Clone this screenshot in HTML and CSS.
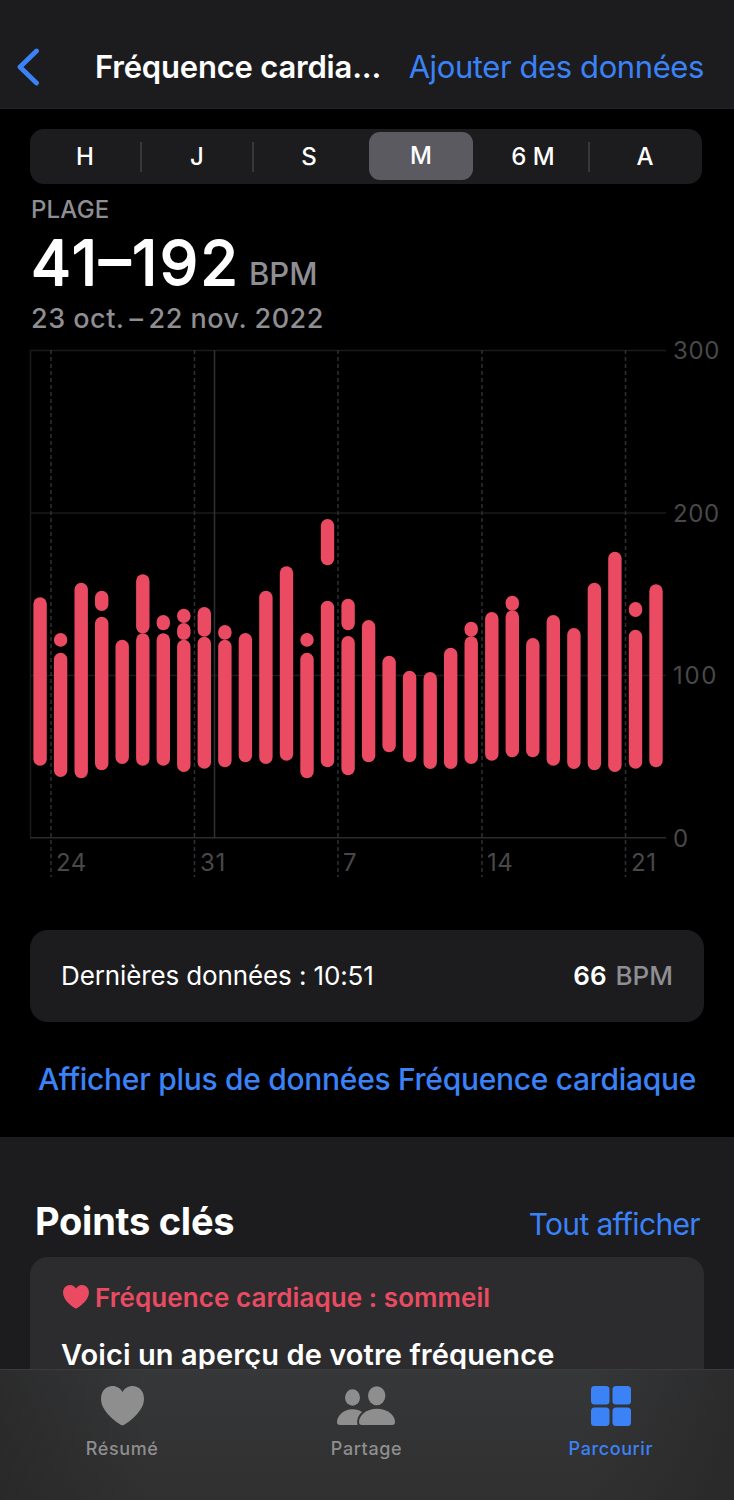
FILE: index.html
```html
<!DOCTYPE html>
<html lang="fr">
<head>
  <meta charset="UTF-8" />
  <title>Fréquence cardiaque</title>
  <link rel="stylesheet" href="styles.css">
</head>
<body>
  <header class="navbar">
    <svg class="back" width="24" height="38" viewBox="0 0 24 38"><path d="M20.500 3 L4 19 L20.500 35" /></svg>
    <h1>Fréquence cardia...</h1>
    <a class="add">Ajouter des données</a>
  </header>

  <main>
    <div class="segments">
      <span>H</span>
      <span class="line">J</span>
      <span class="line">S</span>
      <span class="active">M</span>
      <span>6 M</span>
      <span class="line">A</span>
    </div>

    <div class="range">
      <div class="label">PLAGE</div>
      <div class="value">
        <svg width="212" height="60" viewBox="0 0 212 60"><text x="0" y="60" textLength="207">41–192</text></svg>
        <span class="unit">BPM</span>
      </div>
      <div class="dates">23 oct.&#8198;–&#8198;22 nov. 2022</div>
    </div>

    <!-- y: 838 = 0 BPM, 350 = 300 BPM -->
    <svg class="chart" width="734" height="550" viewBox="0 330 734 550">
      <g class="grid">
        <path d="M30.5 350.5H666M30.5 513H666M30.5 675.5H666M30.5 350V838" />
        <path class="axis" d="M30 837.8H666" />
        <path class="week" d="M51 350V877M194.500 350V877M338 350V877M482 350V877M625.500 350V877" />
        <path class="month" d="M214.500 350V838" />
      </g>
      <g class="bars" id="bars"></g>
      <g class="ticks">
        <text x="56" y="871">24</text>
        <text x="200" y="871">31</text>
        <text x="343" y="871">7</text>
        <text x="487" y="871">14</text>
        <text x="631" y="871">21</text>
        <text x="673" y="359">300</text>
        <text x="673" y="522">200</text>
        <text x="673" y="684" textLength="44">100</text>
        <text x="673" y="847">0</text>
      </g>
    </svg>

    <div class="latest">
      <span class="when">Dernières données : 10:51</span>
      <span class="bpm"><b>66</b> BPM</span>
    </div>
    <a class="more">Afficher plus de données Fréquence cardiaque</a>
  </main>

  <section class="highlights">
    <div class="heading">
      <h2>Points clés</h2>
      <a class="all">Tout afficher</a>
    </div>
    <div class="card">
      <div class="topic">
        <svg width="26" height="24" viewBox="0 0 43 40"><path d="M21.500 39.500C20 39.500 0 27 0 13C0 5 5 0 11.500 0C16 0 19.500 2.500 21.500 6C23.500 2.500 27 0 31.500 0C38 0 43 5 43 13C43 27 23 39.500 21.500 39.500Z" /></svg>
        <span>Fréquence cardiaque : sommeil</span>
      </div>
      <p>Voici un aperçu de votre fréquence</p>
    </div>
  </section>

  <nav class="tabbar">
    <a class="tab">
      <svg width="43" height="40" viewBox="0 0 43 40"><path d="M21.500 39.500C20 39.500 0 27 0 13C0 5 5 0 11.500 0C16 0 19.500 2.500 21.500 6C23.500 2.500 27 0 31.500 0C38 0 43 5 43 13C43 27 23 39.500 21.500 39.500Z" /></svg>
      <span>Résumé</span>
    </a>
    <a class="tab">
      <svg width="58" height="40" viewBox="0 0 58 40">
        <ellipse cx="15.500" cy="11.500" rx="7.500" ry="8.200" />
        <path d="M3 39C1 39 0 38 0 36.500C0 30 6 23.300 15.500 23.300C19.500 23.300 22.500 24.300 25 26C21.500 29 19.500 33.500 20.500 39Z" />
        <ellipse cx="39.700" cy="9.700" rx="8.700" ry="9.500" />
        <path d="M25 39C23 39 22 38 22 36C22 29.500 29 22.700 40 22.700C51 22.700 58 29.500 58 36C58 38 57 39 55 39Z" />
      </svg>
      <span>Partage</span>
    </a>
    <a class="tab selected">
      <svg width="40" height="40" viewBox="0 0 40 40">
        <rect width="18.500" height="18.500" rx="3.500" />
        <rect x="21.500" width="18.500" height="18.500" rx="3.500" />
        <rect y="21.500" width="18.500" height="18.500" rx="3.500" />
        <rect x="21.500" y="21.500" width="18.500" height="18.500" rx="3.500" />
      </svg>
      <span>Parcourir</span>
    </a>
  </nav>

  <script src="chart.js"></script>
</body>
</html>
```
FILE: styles.css
```css
body {
  margin: 0;
  height: 1500px;
  overflow: hidden;
  background: #000;
  color: #fff;
  font-family: Inter, "Liberation Sans", sans-serif;
}
h1, h2, p {
  margin: 0;
}
a {
  color: #3b82f7;
  white-space: nowrap;
}
.navbar {
  box-sizing: border-box;
  height: 109px;
  padding: 26px 30px 0 16px;
  display: flex;
  align-items: center;
  background: #1c1c1e;
  border-bottom: 1px solid #232325;
}
.back {
  fill: none;
  stroke: #3b82f7;
  stroke-width: 4.8;
  stroke-linecap: round;
  stroke-linejoin: round;
}
.navbar h1 {
  margin-left: 55px;
  font-size: 31px;
  font-weight: 600;
  letter-spacing: -0.2px;
  line-height: 36px;
  padding-bottom: 1px;
  white-space: nowrap;
}
.add {
  margin-left: auto;
  font-size: 31px;
  line-height: 36px;
  padding-bottom: 1px;
  letter-spacing: -0.4px;
}
.segments {
  box-sizing: border-box;
  width: 672px;
  height: 55px;
  margin: 20px 0 0 30px;
  display: grid;
  grid-template-columns: repeat(6, 1fr);
  align-items: center;
  background: #1c1c1e;
  border-radius: 14px;
  font-size: 24px;
  font-weight: 500;
  text-align: center;
}
.segments span {
  height: 30px;
  line-height: 30px;
  text-indent: -2px;
}
.segments .line {
  border-left: 2px solid #38383b;
  margin-left: -2px;
}
.segments .active {
  height: 48px;
  line-height: 48px;
  margin: 0 5px 1px 3px;
  text-indent: 0;
  background: #5b5a60;
  border-radius: 11px;
}
.range {
  height: 146px;
  padding-left: 31px;
  color: #8e8e93;
}
.label {
  padding-top: 11px;
  font-size: 24px;
  line-height: 30px;
  font-weight: 500;
  letter-spacing: 0.2px;
}
.value {
  height: 78px;
  display: flex;
  align-items: baseline;
}
.value svg {
  overflow: visible;
}
.value text {
  fill: #fff;
  stroke: #fff;
  stroke-width: 1.8;
  stroke-linejoin: round;
  font-size: 62px;
  font-weight: 400;
}
.value .unit {
  margin-left: 6px;
  font-size: 31px;
  font-weight: 500;
}
.dates {
  font-size: 27px;
  line-height: 32px;
  font-weight: 500;
  letter-spacing: 0.5px;
}
.chart {
  display: block;
}
.grid path {
  fill: none;
  stroke: #1a1a1c;
  stroke-width: 1.5;
}
.grid .axis {
  stroke: #2c2c2e;
}
.grid .week {
  stroke: #303032;
  stroke-dasharray: 4 3;
}
.grid .month {
  stroke: #303032;
}
.bars {
  fill: #ea4b62;
}
.ticks {
  fill: #48484a;
  font-size: 24px;
  letter-spacing: 0.6px;
}
.latest {
  box-sizing: border-box;
  height: 92px;
  margin: 50px 30px 0;
  padding: 0 31px;
  display: flex;
  align-items: center;
  justify-content: space-between;
  background: #1c1c1e;
  border-radius: 18px;
  font-size: 26px;
  line-height: 30px;
}
.latest .when {
  letter-spacing: -0.12px;
}
.latest .bpm {
  color: #8e8e93;
  font-weight: 500;
}
.latest b {
  margin-right: 2px;
  color: #fff;
  font-weight: 600;
}
.more {
  display: block;
  height: 115px;
  line-height: 115px;
  font-size: 30px;
  font-weight: 500;
  letter-spacing: -0.3px;
  text-align: center;
}
.highlights {
  height: 363px;
  background: #1c1c1e;
}
.heading {
  height: 120px;
  padding: 0 34px 0 35px;
  display: flex;
  align-items: baseline;
  justify-content: space-between;
}
.heading h2 {
  font-size: 38px;
  font-weight: 700;
  line-height: 168px;
  letter-spacing: -0.25px;
}
.all {
  font-size: 30px;
  letter-spacing: -0.65px;
}
.card {
  height: 242px;
  margin: 0 30px;
  padding: 0 31px;
  background: #2c2c2e;
  border-radius: 18px;
}
.topic {
  height: 80px;
  padding-left: 2px;
  display: flex;
  align-items: center;
  gap: 6px;
  color: #ea4b62;
  font-size: 26px;
  font-weight: 600;
  letter-spacing: 0.07px;
}
.topic svg {
  fill: #ea4b62;
}
.card p {
  font-size: 29px;
  line-height: 36px;
  font-weight: 600;
  letter-spacing: 0.09px;
}
.tabbar {
  position: fixed;
  left: 0;
  bottom: 0;
  box-sizing: border-box;
  width: 734px;
  height: 131px;
  padding-right: 1px;
  display: grid;
  grid-template-columns: repeat(3, 1fr);
  background: linear-gradient(90deg, rgba(36, 36, 37, .6), transparent 20%, transparent 80%, rgba(38, 38, 39, .7)), linear-gradient(#363738, #303031);
  border-top: 1px solid #3b3b3c;
}
.tab {
  padding-top: 16px;
  display: flex;
  flex-direction: column;
  align-items: center;
  color: #8e8e8f;
  fill: #8e8e8f;
  font-size: 18px;
  font-weight: 500;
  letter-spacing: 0.6px;
}
.tab span {
  margin-top: 11px;
  line-height: 24px;
}
.tab.selected {
  color: #3b82f7;
  fill: #3b82f7;
}
```
FILE: chart.js
```js
// one entry per day, each segment is [top, bottom]
const days = [
  [[597.3, 765.7]],
  [[633, 646.7], [652.7, 777]],
  [[582.7, 778.3]],
  [[590.7, 611], [616.7, 770.3]],
  [[639.7, 764]],
  [[574.3, 633.5], [633.3, 765.7]],
  [[615, 630.3], [633.3, 765.7]],
  [[608.7, 623], [623, 640], [639.7, 772]],
  [[607, 636.7], [636.7, 768.7]],
  [[625, 639.7], [639.7, 767.3]],
  [[633, 762.3]],
  [[590.7, 764]],
  [[566.3, 760.7]],
  [[633, 646.7], [652.7, 778.3]],
  [[519, 565.3], [600.7, 767.3]],
  [[598.7, 630.3], [636, 775.3]],
  [[620, 762.3]],
  [[655.7, 752.3]],
  [[670.7, 762.3]],
  [[672, 769]],
  [[647.7, 769]],
  [[621.7, 636.7], [636.3, 764]],
  [[612, 760.7]],
  [[595.7, 610.7], [610.3, 757.3]],
  [[638, 757.3]],
  [[615, 765.7]],
  [[628, 769]],
  [[582.7, 770.3]],
  [[551.7, 772]],
  [[602, 617], [629.7, 768.7]],
  [[584.3, 767.3]]
];

let bars = "";
days.forEach((segments, i) => {
  const x = (33.4 + i * 20.53).toFixed(1);
  for (const [top, bottom] of segments) {
    bars += `<rect x="${x}" y="${top}" width="13.4" height="${(bottom - top).toFixed(1)}" rx="6.7" />`;
  }
});
document.getElementById("bars").innerHTML = bars;
```
